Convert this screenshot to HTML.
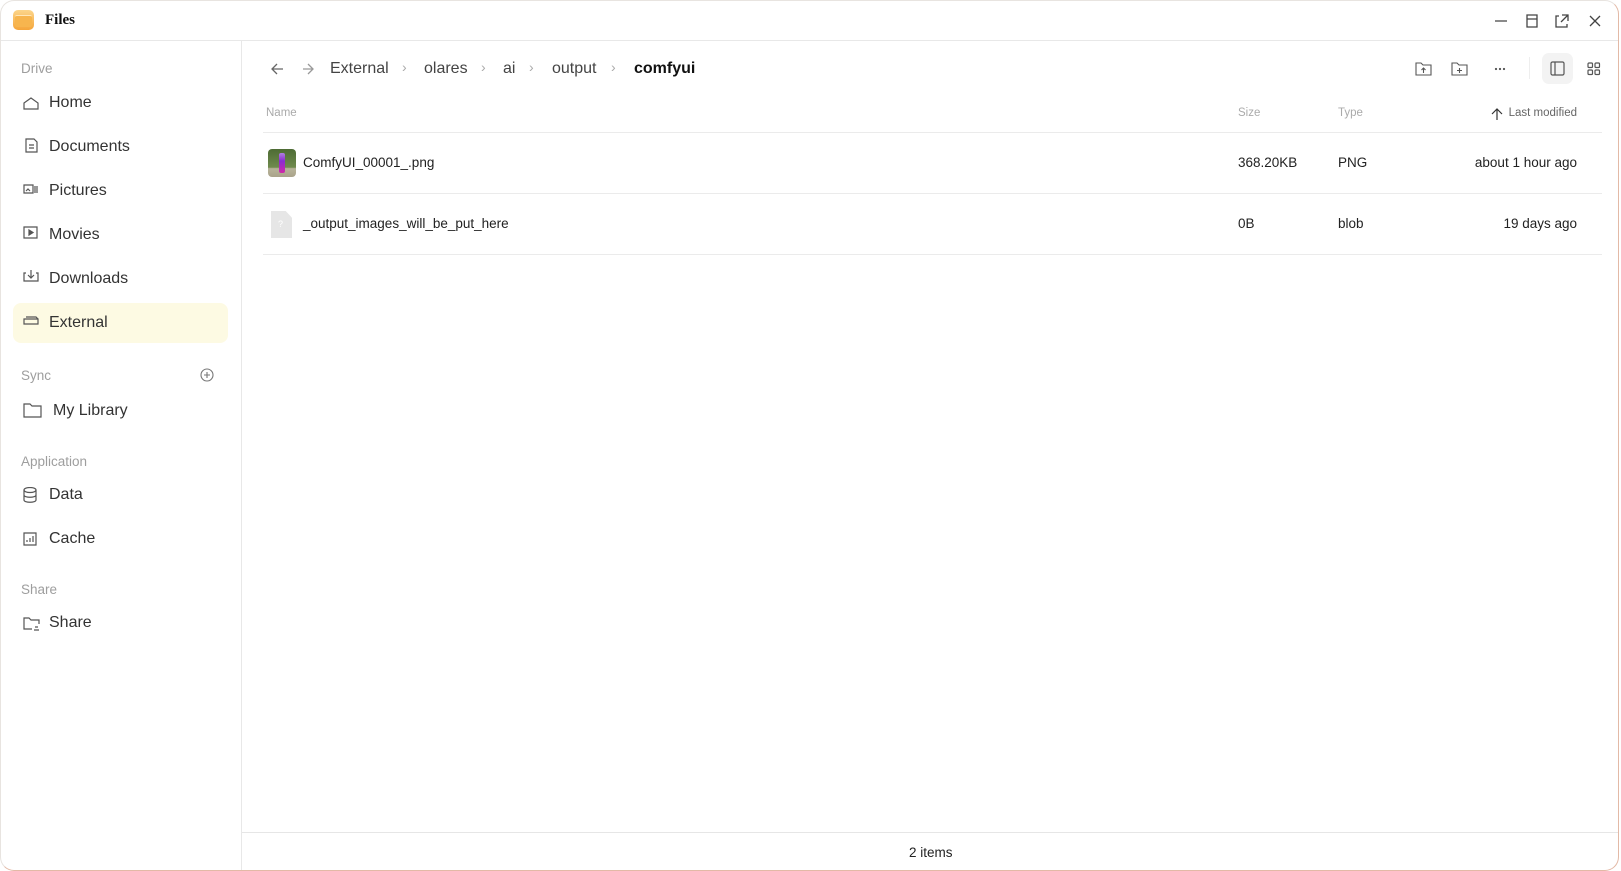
<!DOCTYPE html>
<html><head><meta charset="utf-8"><style>
*{margin:0;padding:0;box-sizing:border-box}
body{width:1621px;height:871px;background:#fff;font-family:"Liberation Sans",Roboto,sans-serif;color:#1f1f1f;position:relative;overflow:hidden}
.win{position:absolute;left:0;top:0;width:1619px;height:871px;border:1px solid #e8e4e0;border-right:1.5px solid #e3b9a6;border-bottom:1.5px solid #e3b9a6;border-radius:14px;overflow:hidden}
.a{position:absolute;white-space:nowrap}
.lbl{font-size:13.5px;color:#9e9e9e}
.it{font-size:16px;color:#333;left:48px}
.bc{font-size:16px;color:#444;top:59px}
.ch{font-size:14px;color:#aaa;top:58px}
.hd{font-size:11.5px;color:#aaa;top:106px}
.cell{font-size:13.5px;color:#222}
.hl{position:absolute;left:262px;width:1339px;height:1px;background:#ebebeb}
</style></head><body><div class="win">
<div class="a" style="left:12px;top:9px;width:21px;height:20px;border-radius:5px;background:linear-gradient(#fcd58a,#f5a53a)"><div style="position:absolute;left:2px;top:5px;width:17px;height:12px;background:#f7b54e;border-radius:2px;border-top:1px solid #ffe7b8"></div></div>
<div class="a" style="left:44px;top:11px;font-family:'Liberation Serif',serif;font-weight:bold;font-size:15px;color:#111">Files</div>
<svg class="a" style="left:1487px;top:12px" width="130" height="16" fill="none" stroke="#444" stroke-width="1.3"><path d="M7 8h12"/><path d="M39 2h10v12h-10z M39 6h10"/><path d="M71 3h-3v11h11v-3 M74 2h6v6 M80 2l-7 7"/><path d="M102 3l10 10 M112 3l-10 10"/></svg>
<div class="a" style="left:0;top:39px;width:1621px;height:1px;background:#e8e8e8"></div>
<div class="a" style="left:240px;top:40px;width:1px;height:831px;background:#e8e8e8"></div>
<div class="a lbl" style="left:20px;top:60px">Drive</div>
<div class="a" style="left:12px;top:302px;width:215px;height:40px;background:#fdfae3;border-radius:8px"></div>
<svg class="a" style="left:21px;top:94px" width="18" height="240" fill="none" stroke="#555" stroke-width="1.2">
<path d="M2 8l7-5 7 5v6H2z"/>
<path d="M4 44h8l3 3v10H4z M7 50h5 M7 53h5"/>
<path d="M2 90h9v8H2z M4 96l2-2 2 2 M13 91v7 M15 91v7"/>
<path d="M2 132h13v11H2z"/>
<path d="M7 135l4 2.5-4 2.5z" fill="#555"/>
<path d="M9 175v8 M6 180l3 3 3-3 M4 178H2v8h14v-8h-2"/>
<path d="M2 224h14v5H2z M4 222h10l2 2"/>
</svg>
<div class="a it" style="top:93px">Home</div>
<div class="a it" style="top:137px">Documents</div>
<div class="a it" style="top:181px">Pictures</div>
<div class="a it" style="top:225px">Movies</div>
<div class="a it" style="top:269px">Downloads</div>
<div class="a it" style="top:313px">External</div>
<div class="a lbl" style="left:20px;top:367px">Sync</div>
<svg class="a" style="left:199px;top:367px" width="14" height="14" fill="none" stroke="#777" stroke-width="1.1"><circle cx="7" cy="7" r="6"/><path d="M7 4v6M4 7h6"/></svg>
<svg class="a" style="left:22px;top:401px" width="20" height="18" fill="none" stroke="#555" stroke-width="1.2"><path d="M1 2h6l2 2h9v11H1z"/></svg>
<div class="a it" style="left:52px;top:401px">My Library</div>
<div class="a lbl" style="left:20px;top:453px">Application</div>
<svg class="a" style="left:22px;top:486px" width="16" height="70" fill="none" stroke="#555" stroke-width="1.2"><ellipse cx="7" cy="3" rx="6" ry="2.5"/><path d="M1 3v10c0 3 12 3 12 0V3 M1 8c0 3 12 3 12 0"/><path d="M1 46h12v12H1z M4 55v-2 M7 55v-4 M10 55v-6"/></svg>
<div class="a it" style="top:485px">Data</div>
<div class="a it" style="top:529px">Cache</div>
<div class="a lbl" style="left:20px;top:581px">Share</div>
<svg class="a" style="left:22px;top:615px" width="18" height="16" fill="none" stroke="#555" stroke-width="1.2"><path d="M9 13H1V2h5l2 2h8v4 M12 11l3 0 M11 14h5"/></svg>
<div class="a it" style="top:613px">Share</div>
<svg class="a" style="left:269px;top:61px" width="45" height="14" fill="none" stroke="#666" stroke-width="1.3"><path d="M13 7H2 M7 2L2 7l5 5"/><path d="M43 7H33 M38 2l5 5-5 5" stroke="#999"/></svg>
<div class="a bc" style="left:329px">External</div>
<div class="a ch" style="left:401px">›</div>
<div class="a bc" style="left:423px">olares</div>
<div class="a ch" style="left:480px">›</div>
<div class="a bc" style="left:502px">ai</div>
<div class="a ch" style="left:528px">›</div>
<div class="a bc" style="left:551px">output</div>
<div class="a ch" style="left:610px">›</div>
<div class="a bc" style="left:633px;font-weight:bold;color:#111">comfyui</div>
<svg class="a" style="left:1413px;top:59px" width="100" height="18" fill="none" stroke="#555" stroke-width="1.1"><path d="M2 3h5l2 2h8v10H2z M9.5 13V8 M7.5 10l2-2 2 2"/><path d="M38 3h5l2 2h8v10H38z M45.5 8v5 M43 10.5h5"/><circle cx="82" cy="9" r=".6" fill="#555"/><circle cx="86" cy="9" r=".6" fill="#555"/><circle cx="90" cy="9" r=".6" fill="#555"/></svg>
<div class="a" style="left:1528px;top:56px;width:1px;height:22px;background:#eee"></div>
<div class="a" style="left:1541px;top:52px;width:31px;height:31px;background:#f3f3f3;border-radius:7px"></div>
<svg class="a" style="left:1549px;top:60px" width="60" height="16" fill="none" stroke="#555" stroke-width="1.2"><rect x="1" y="1" width="13" height="13" rx="1.5"/><path d="M5 1v13"/><rect x="38" y="2" width="4.5" height="4.5" rx="1"/><rect x="45" y="2" width="4.5" height="4.5" rx="1"/><rect x="38" y="9" width="4.5" height="4.5" rx="1"/><rect x="45" y="9" width="4.5" height="4.5" rx="1"/></svg>
<div class="a hd" style="left:265px">Name</div>
<div class="a hd" style="left:1237px">Size</div>
<div class="a hd" style="left:1337px">Type</div>
<div class="a hd" style="right:41px;color:#666">Last modified</div>
<svg class="a" style="left:1490px;top:106px" width="12" height="14" fill="none" stroke="#333" stroke-width="1.2"><path d="M6 13V2 M1 7l5-5 5 5"/></svg>
<div class="hl" style="top:131px"></div>
<div class="hl" style="top:192px"></div>
<div class="hl" style="top:253px"></div>
<div class="a" style="left:267px;top:148px;width:28px;height:28px;border-radius:4px;background:linear-gradient(#4d6b34,#6f8a4d 65%,#b8b39a 70%,#a9a38a);overflow:hidden"><div style="position:absolute;left:11px;top:4px;width:6px;height:20px;background:linear-gradient(#b080e0,#8a2bd0 40%,#d02aa8);border-radius:2px"></div></div>
<div class="a cell" style="left:302px;top:154px">ComfyUI_00001_.png</div>
<div class="a" style="left:270px;top:210px;width:21px;height:27px;background:#e6e6e6;clip-path:polygon(0 0,70% 0,100% 25%,100% 100%,0 100%)"><div style="position:absolute;left:7px;top:8px;font-size:9px;color:#fff">?</div></div>
<div class="a cell" style="left:302px;top:215px">_output_images_will_be_put_here</div>
<div class="a cell" style="left:1237px;top:154px">368.20KB</div>
<div class="a cell" style="left:1337px;top:154px">PNG</div>
<div class="a cell" style="right:41px;top:154px">about 1 hour ago</div>
<div class="a cell" style="left:1237px;top:215px">0B</div>
<div class="a cell" style="left:1337px;top:215px">blob</div>
<div class="a cell" style="right:41px;top:215px">19 days ago</div>
<div class="a" style="left:241px;top:831px;width:1380px;height:1px;background:#e6e6e6"></div>
<div class="a cell" style="left:908px;top:844px">2 items</div>
</div></body></html>
